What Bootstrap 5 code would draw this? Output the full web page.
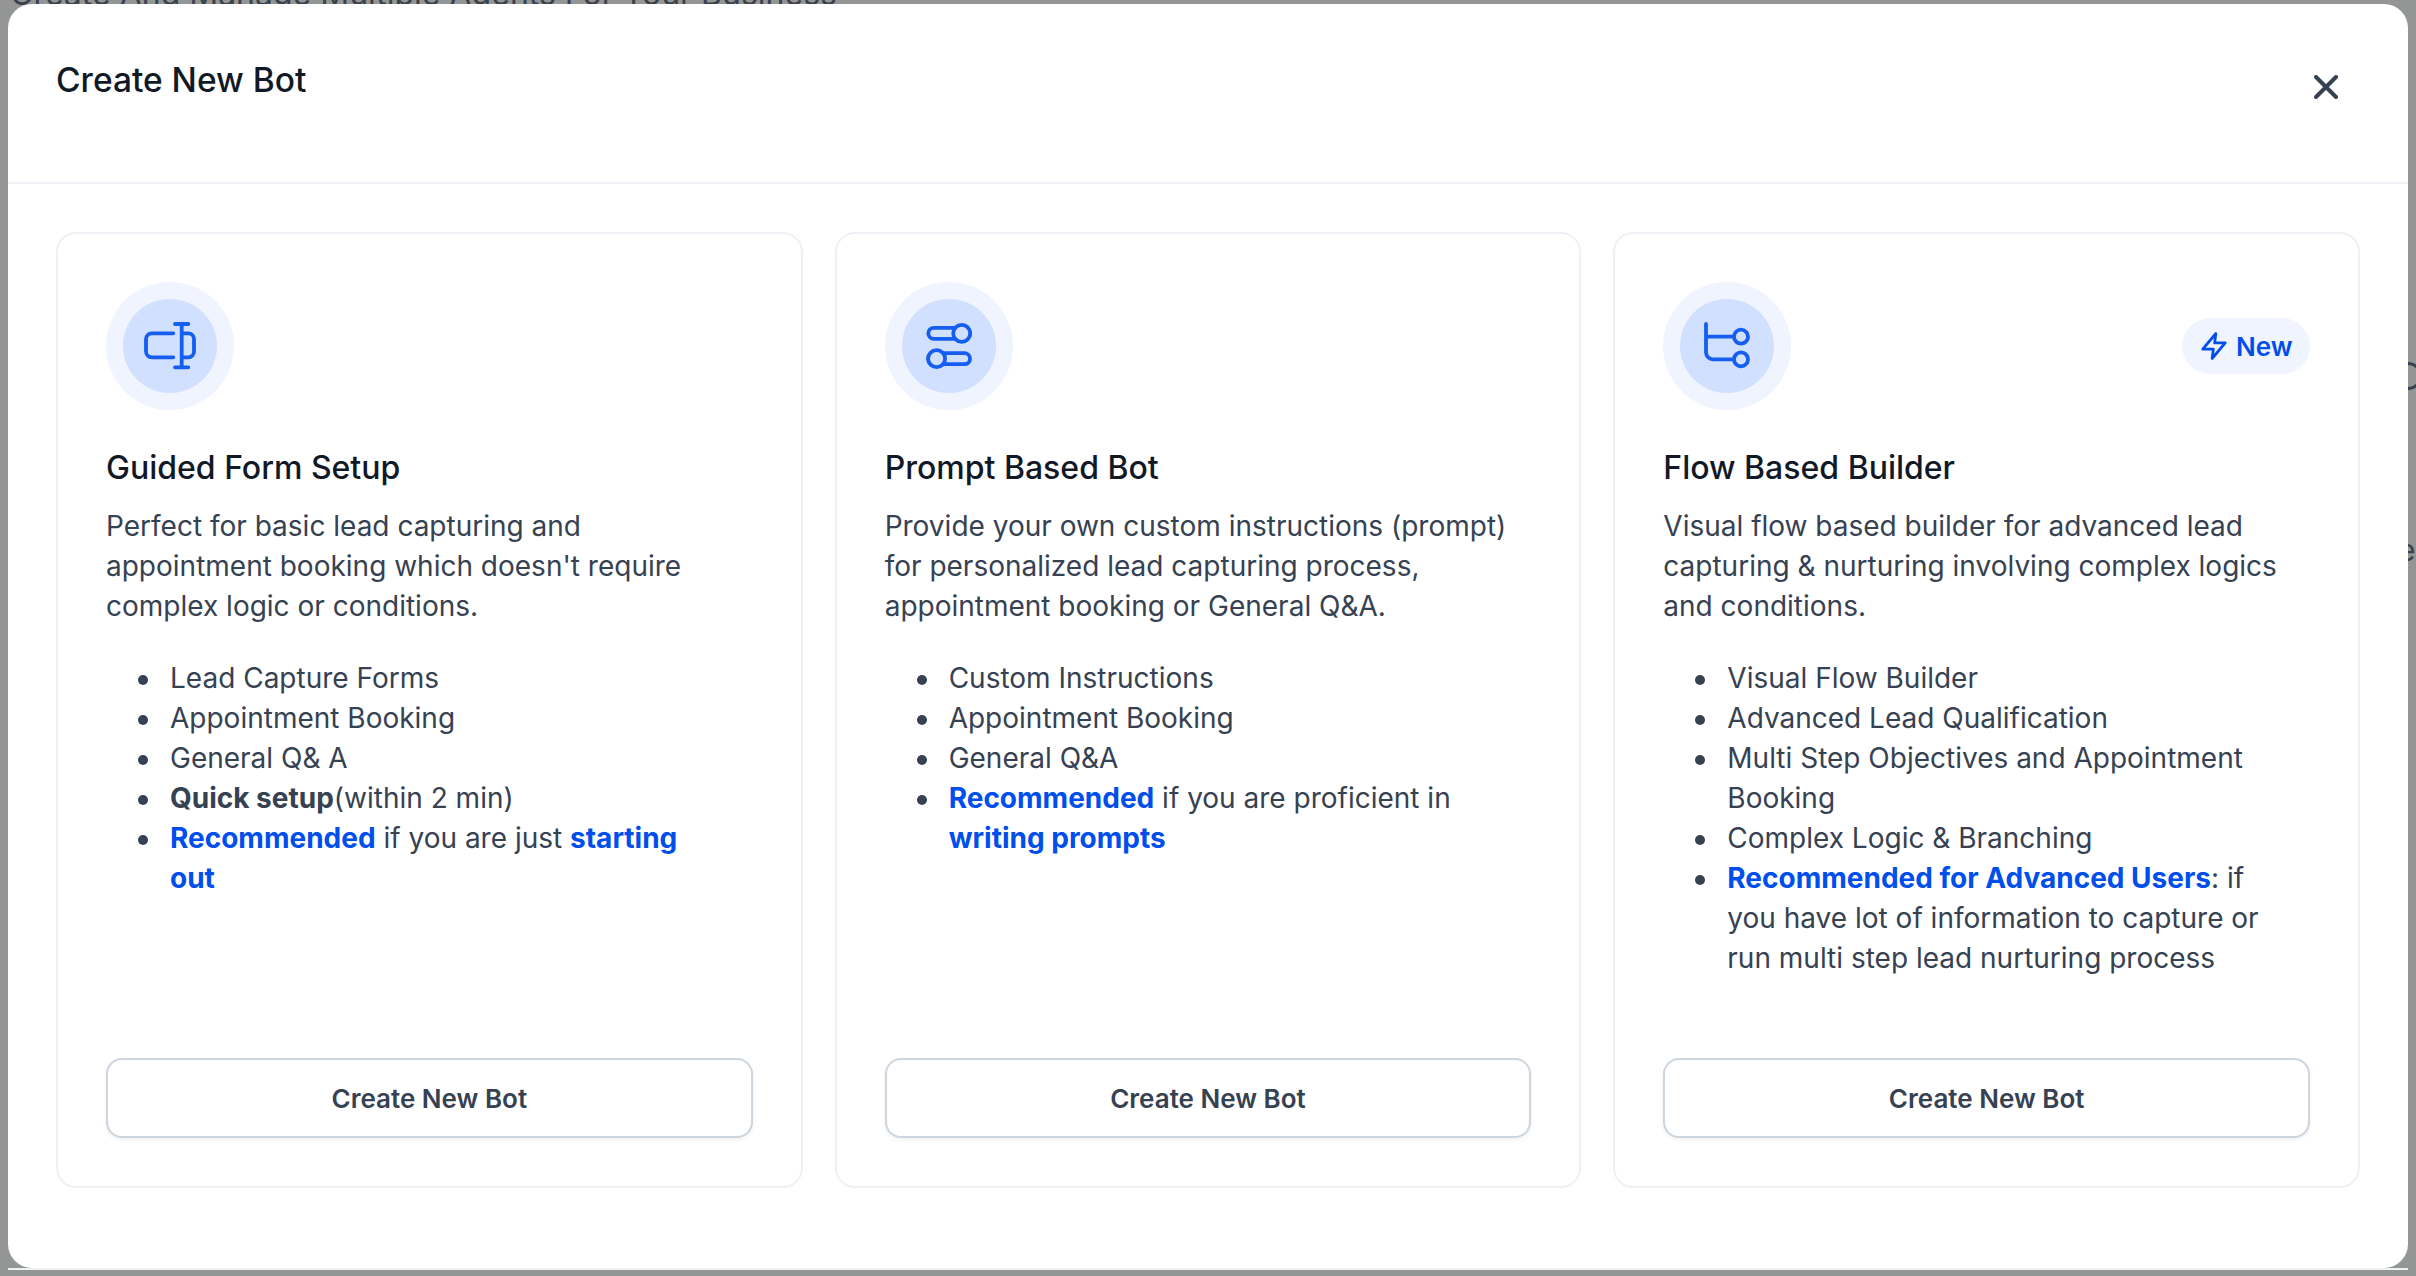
<!DOCTYPE html>
<html lang="en">
<head>
  <meta charset="UTF-8" />
  <meta name="viewport" content="width=device-width, initial-scale=1.0" />
  <title>Create New Bot</title>
  <link rel="stylesheet" href="https://cdn.jsdelivr.net/npm/bootstrap@5.3.0/dist/css/bootstrap.min.css"/>
  <style>
    body {
      background-color: #949695;
      font-family: Inter, "Liberation Sans", sans-serif;
      color: #364152;
      overflow: hidden;
    }
    /* page behind the dialog, only slivers of it show */
    .page-behind {
      position: absolute;
      top: -26px;
      left: 10px;
      font-size: 32px;
      line-height: 40px;
      color: #3a414c;
      white-space: nowrap;
    }
    .behind-ring {
      position: absolute;
      top: 362px;
      left: 2394px;
      width: 28px;
      height: 28px;
      border: 3px solid #3a414c;
      border-radius: 50%;
    }
    .behind-letter {
      position: absolute;
      top: 530px;
      left: 2398px;
      font-size: 30px;
      line-height: 40px;
      color: #3a414c;
    }
    .shade-wrap {
      position: relative;
      height: 100vh;
      padding: 4px 8px 6px;
    }
    .bot-modal {
      height: 100%;
      border: 0;
      border-radius: 24px;
      background: #fff;
    }
    .under-strip {
      height: 2px;
      background: #eef2f6;
    }
    .bot-modal .modal-header {
      height: 180px;
      align-items: flex-start;
      padding: 56px 48px 0;
      border-bottom: 2px solid #eef2f6;
    }
    .bot-modal .modal-title {
      font-size: 33.5px;
      line-height: 40px;
      font-weight: 500;
      color: #121926;
    }
    .close-x {
      margin: 13px 22px 0 0;
      padding: 0;
      width: 24px;
      height: 24px;
      display: block;
      background: none;
      border: 0;
    }
    .bot-modal .modal-body {
      padding: 48px 48px 80px;
    }
    .bot-row {
      --bs-gutter-x: 32px;
      height: 100%;
    }
    .bot-card {
      height: 100%;
      padding: 48px;
      border: 2px solid #eef2f6;
      border-radius: 20px;
      --bs-card-bg: #fff;
    }
    .icon-ring {
      width: 128px;
      height: 128px;
      border-radius: 50%;
      background: #eff4ff;
    }
    .icon-core {
      width: 94px;
      height: 94px;
      border-radius: 50%;
      background: #d1e0ff;
    }
    .new-pill {
      width: 128px;
      height: 56px;
      padding-left: 17px;
      gap: 7px;
      border-radius: 28px;
      background: #eff4ff;
      color: #004eeb;
      font-size: 26px;
      font-weight: 600;
    }
    .bot-title {
      margin: 34px 0 0;
      font-size: 32px;
      line-height: 48px;
      font-weight: 500;
      color: #121926;
    }
    .bot-text {
      margin: 14px 0 0;
      font-size: 28px;
      line-height: 40px;
    }
    .bot-list {
      margin: 32px 0 0;
      padding: 0 48px 0 64px;
      font-size: 28px;
      line-height: 40px;
      list-style: none;
    }
    .bot-list li {
      position: relative;
    }
    .bot-list li::before {
      content: "";
      position: absolute;
      top: 17px;
      left: -32px;
      width: 10px;
      height: 10px;
      border-radius: 50%;
      background: #364152;
    }
    .bot-list b {
      font-weight: 700;
    }
    .blue-bit {
      color: #004eeb;
    }
    .bot-btn {
      height: 80px;
      margin-top: auto;
      border: 2px solid #cdd5df;
      border-radius: 16px;
      background: #fff;
      box-shadow: 0 2px 4px rgba(16, 24, 40, 0.06);
      color: #364152;
      font-size: 26px;
      font-weight: 600;
    }
  </style>
</head>
<body>

<div class="page-behind">Create And Manage Multiple Agents For Your Business</div>
<div class="behind-ring"></div>
<div class="behind-letter">e</div>

<div class="shade-wrap d-flex flex-column">
  <div class="modal-content bot-modal">
    <div class="modal-header">
      <h5 class="modal-title">Create New Bot</h5>
      <button type="button" class="close-x ms-auto" aria-label="Close">
        <svg width="24" height="24" viewBox="0 0 24 24" fill="none" stroke="#364152" stroke-width="4" stroke-linecap="round"><path d="M2 2l20 20M22 2L2 22"/></svg>
      </button>
    </div>
    <div class="modal-body">
      <div class="row bot-row">

        <div class="col-4">
          <div class="card bot-card">
            <div class="d-flex justify-content-between align-items-center">
              <div class="icon-ring d-flex align-items-center justify-content-center">
                <div class="icon-core d-flex align-items-center justify-content-center">
                  <svg width="64" height="64" viewBox="0 0 64 64" fill="none" stroke="#155eef" stroke-width="3.8" stroke-linecap="round" stroke-linejoin="round">
                    <path d="M35.3 19.3H13.7A5.7 5.7 0 0 0 8 25V37.6A5.7 5.7 0 0 0 13.7 43.3H35.3"/>
                    <path d="M45.3 19.3H50.3A5.7 5.7 0 0 1 56 25V37.6A5.7 5.7 0 0 1 50.3 43.3H45.3"/>
                    <path d="M43.7 10V53.3M37 10H50.3M37 53.3H50.3"/>
                  </svg>
                </div>
              </div>
            </div>
            <h6 class="bot-title">Guided Form Setup</h6>
            <p class="bot-text">Perfect for basic lead capturing and appointment booking which doesn't require complex logic or conditions.</p>
            <ul class="bot-list">
              <li>Lead Capture Forms</li>
              <li>Appointment Booking</li>
              <li>General Q&amp; A</li>
              <li><b>Quick setup</b>(within 2 min)</li>
              <li><b class="blue-bit">Recommended</b> if you are just <b class="blue-bit">starting out</b></li>
            </ul>
            <button type="button" class="btn bot-btn w-100">Create New Bot</button>
          </div>
        </div>

        <div class="col-4">
          <div class="card bot-card">
            <div class="d-flex justify-content-between align-items-center">
              <div class="icon-ring d-flex align-items-center justify-content-center">
                <div class="icon-core d-flex align-items-center justify-content-center">
                  <svg width="64" height="64" viewBox="0 0 64 64" fill="#d1e0ff" stroke="#155eef" stroke-width="3.8">
                    <rect x="11.3" y="13.8" width="41.7" height="11" rx="5.5"/>
                    <circle cx="44.7" cy="19.3" r="8.5"/>
                    <rect x="11.3" y="39.2" width="41.7" height="11" rx="5.5"/>
                    <circle cx="19.6" cy="44.7" r="8.5"/>
                  </svg>
                </div>
              </div>
            </div>
            <h6 class="bot-title">Prompt Based Bot</h6>
            <p class="bot-text">Provide your own custom instructions (prompt) for personalized lead capturing process, appointment booking or General Q&amp;A.</p>
            <ul class="bot-list">
              <li>Custom Instructions</li>
              <li>Appointment Booking</li>
              <li>General Q&amp;A</li>
              <li><b class="blue-bit">Recommended</b> if you are proficient in <b class="blue-bit">writing prompts</b></li>
            </ul>
            <button type="button" class="btn bot-btn w-100">Create New Bot</button>
          </div>
        </div>

        <div class="col-4">
          <div class="card bot-card">
            <div class="d-flex justify-content-between align-items-center">
              <div class="icon-ring d-flex align-items-center justify-content-center">
                <div class="icon-core d-flex align-items-center justify-content-center">
                  <svg width="64" height="64" viewBox="0 0 64 64" fill="none" stroke="#155eef" stroke-width="3.8" stroke-linecap="round" stroke-linejoin="round">
                    <path d="M11 10V38.3A7 7 0 0 0 18 45.3H38.3M11 22.7H38.3"/>
                    <circle cx="46" cy="22.7" r="7"/>
                    <circle cx="46" cy="45.3" r="7"/>
                  </svg>
                </div>
              </div>
              <div class="new-pill d-flex align-items-center">
                <svg width="30" height="32" viewBox="0 0 24 24" fill="none" stroke="#004eeb" stroke-width="2.200" stroke-linejoin="round"><path d="M13.500 2 3 14.500h8.500L10.500 22 21 9.500h-8.500z"/></svg>
                <span>New</span>
              </div>
            </div>
            <h6 class="bot-title">Flow Based Builder</h6>
            <p class="bot-text">Visual flow based builder for advanced lead capturing &amp; nurturing involving complex logics and conditions.</p>
            <ul class="bot-list">
              <li>Visual Flow Builder</li>
              <li>Advanced Lead Qualification</li>
              <li>Multi Step Objectives and Appointment Booking</li>
              <li>Complex Logic &amp; Branching</li>
              <li><b class="blue-bit">Recommended for Advanced Users</b>: if you have lot of information to capture or run multi step lead nurturing process</li>
            </ul>
            <button type="button" class="btn bot-btn w-100">Create New Bot</button>
          </div>
        </div>

      </div>
    </div>
  </div>
  <div class="under-strip"></div>
</div>

<script src="https://cdn.jsdelivr.net/npm/bootstrap@5.3.0/dist/js/bootstrap.bundle.min.js"></script>
</body>
</html>
